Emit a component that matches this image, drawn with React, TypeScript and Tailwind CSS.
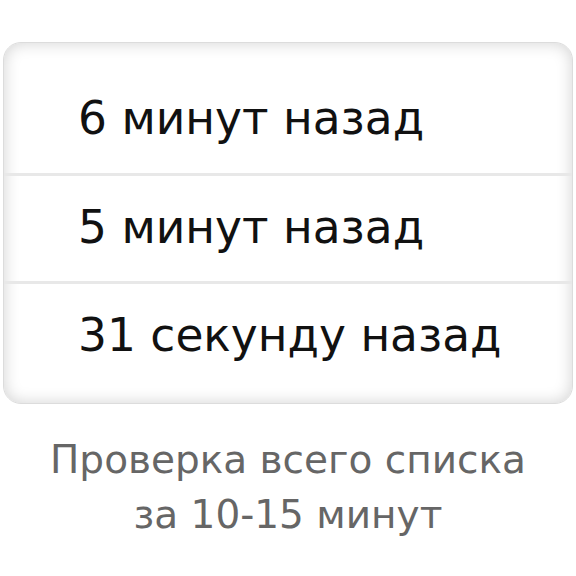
import React from 'react'

const rows = ['6 минут назад', '5 минут назад', '31 секунду назад']

export default function App() {
  return (
    <div className="w-[576px] h-[576px] bg-white pt-[42px] px-[3px] font-['DejaVu_Sans',sans-serif]">
      <div className="rounded-[18px] border border-[#dcdcdc] bg-white pt-[22px] pb-[14px] shadow-[inset_0_0_16px_rgba(0,0,0,0.18)]">
        {rows.map((r, i) => (
          <div
            key={r}
            className={`h-[108px] flex items-center pl-[74px] text-[45.5px] text-[#111] ${i > 0 ? 'border-t-[3px] border-[#e8e8e8]' : ''}`}
          >
            {r}
          </div>
        ))}
      </div>
      <div className="mt-[28px] text-center text-[39px] leading-[55px] text-[#666]">
        <div>Проверка всего списка</div>
        <div>за 10-15 минут</div>
      </div>
    </div>
  )
}
